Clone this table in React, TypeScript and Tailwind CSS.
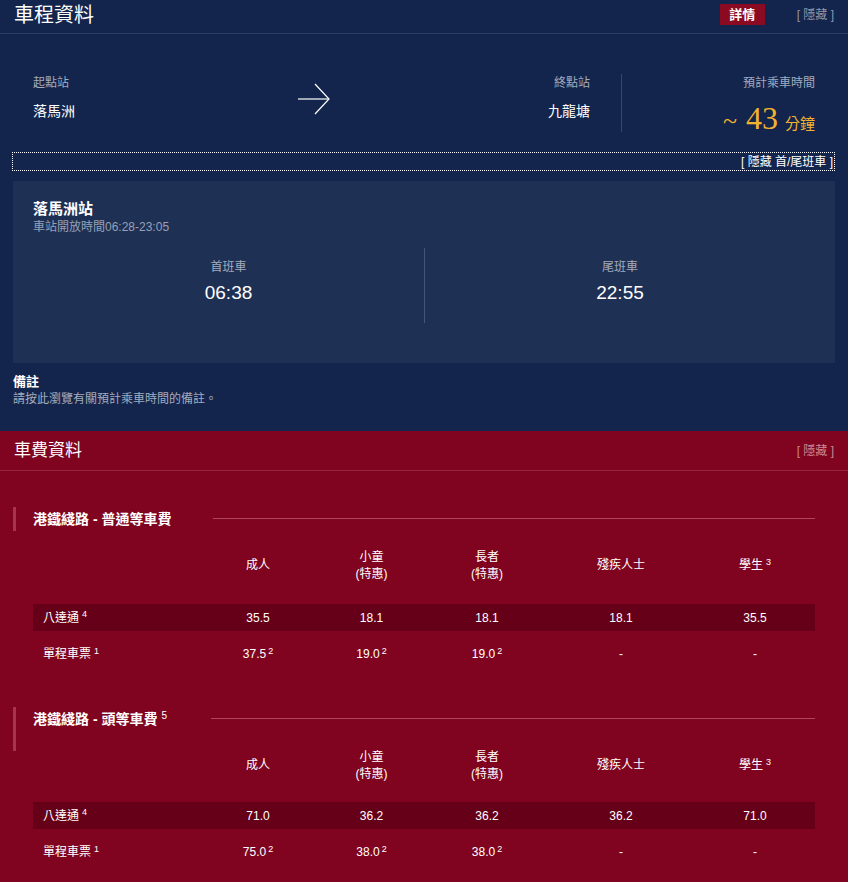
import React from 'react';

const FONT = "font-['Liberation_Sans','Noto_Sans_CJK_TC',sans-serif]";

const COLS = [
  { top: '成人' },
  { top: '小童', sub: '(特惠)' },
  { top: '長者', sub: '(特惠)' },
  { top: '殘疾人士' },
  { top: '學生', sup: '3' },
];

const FARES = [
  {
    title: '港鐵綫路 - 普通等車費',
    barH: 'h-[24px]',
    titleW: 'w-[180px]',
    rowMt: 'mt-[21px]',
    octopus: ['35.5', '18.1', '18.1', '18.1', '35.5'],
    single: ['37.5', '19.0', '19.0', '-', '-'],
  },
  {
    title: '港鐵綫路 - 頭等車費',
    sup: '5',
    barH: 'h-[44px]',
    titleW: 'w-[178px]',
    rowMt: 'mt-[19px]',
    octopus: ['71.0', '36.2', '36.2', '36.2', '71.0'],
    single: ['75.0', '38.0', '38.0', '-', '-'],
  },
];

const GRID = 'grid grid-cols-[167px_116px_111px_120px_148px_120px]';

const Arrow = () => (
  <svg width="34" height="32" viewBox="0 0 34 32" fill="none" stroke="white" strokeWidth="1.2">
    <line x1="1" y1="16" x2="32" y2="16" />
    <polyline points="18,1 32,16 18,31" />
  </svg>
);

const FareTable = ({ fare }: { fare: (typeof FARES)[number] }) => (
  <div className="mb-[30px]">
    {/* section heading */}
    <div className="flex items-start h-[24px] ml-[13px] mr-[33px]">
      <div className={`w-[3px] ${fare.barH} bg-[#a7344f] shrink-0`} />
      <div className={`ml-[17px] ${fare.titleW} shrink-0 text-[14px] leading-[24px] font-bold text-white whitespace-nowrap`}>
        {fare.title}
        {fare.sup && <sup className="ml-[4px] text-[10px] font-normal">{fare.sup}</sup>}
      </div>
      <div className="flex-1 mt-[11px] h-px bg-[#b0465d]" />
    </div>

    <div className="ml-[33px] mr-[33px] mt-[17px]">
      {/* header */}
      <div className={`${GRID} items-center h-[35px] text-[12px] leading-[17px] text-white`}>
        <div />
        {COLS.map((c) => (
          <div key={c.top} className="text-center">
            <div>
              {c.top}
              {c.sup && <sup className="ml-[3px] text-[9px]">{c.sup}</sup>}
            </div>
            {c.sub && <div>{c.sub}</div>}
          </div>
        ))}
      </div>

      {/* octopus row */}
      <div className={`${GRID} items-center h-[27px] ${fare.rowMt} bg-[#660019] text-[12px] text-white`}>
        <div className="pl-[10px]">
          八達通<sup className="ml-[3px] text-[9px]">4</sup>
        </div>
        {fare.octopus.map((v, i) => (
          <div key={i} className="text-center">{v}</div>
        ))}
      </div>

      {/* single journey row */}
      <div className={`${GRID} items-center h-[46px] text-[12px] text-white`}>
        <div className="pl-[10px]">
          單程車票<sup className="ml-[3px] text-[9px]">1</sup>
        </div>
        {fare.single.map((v, i) => (
          <div key={i} className="text-center">
            {v}
            {v !== '-' && <sup className="ml-[2px] text-[9px]">2</sup>}
          </div>
        ))}
      </div>
    </div>
  </div>
);

export default function App() {
  return (
    <div className={`w-[848px] h-[882px] overflow-hidden ${FONT}`}>
      {/* 車程資料 */}
      <section className="bg-[#13254c] pb-[24px]">
        <div className="flex items-start h-[34px] border-b border-[#2a3c68] pl-[14px] pr-[14px]">
          <h1 className="text-[20px] leading-[30px] text-white">車程資料</h1>
          <div className="ml-auto flex items-center mt-[4px]">
            <button className="w-[45px] h-[21px] bg-[#8a0a22] text-white text-[13px] font-bold leading-[21px]">
              詳情
            </button>
            <span className="ml-[32px] text-[12px] text-[#8f98ad]">[ 隱藏 ]</span>
          </div>
        </div>

        {/* trip */}
        <div className="flex items-start mx-[33px] pt-[41px]">
          <div className="w-[557px] flex items-start justify-between">
            <div>
              <div className="text-[12px] leading-[16px] text-[#a3abbd]">起點站</div>
              <div className="mt-[10px] text-[14px] leading-[20px] text-white">落馬洲</div>
            </div>
            <div className="mt-[8px] ml-[4px]">
              <Arrow />
            </div>
            <div className="text-right">
              <div className="text-[12px] leading-[16px] text-[#a3abbd]">終點站</div>
              <div className="mt-[10px] text-[14px] leading-[20px] text-white">九龍塘</div>
            </div>
          </div>
          <div className="ml-[31px] -mt-px w-px h-[58px] bg-[#34466f]" />
          <div className="flex-1 text-right">
            <div className="text-[12px] leading-[16px] text-[#a3abbd]">預計乘車時間</div>
            <div className="mt-[9px] h-[36px] flex items-baseline justify-end text-[#f2b230]">
              <span className="font-['Liberation_Serif',serif] text-[26px] leading-[36px] mr-[9px]">~</span>
              <span className="font-['Liberation_Serif',serif] text-[32px] leading-[36px]">43</span>
              <span className="ml-[7px] text-[15px]">分鐘</span>
            </div>
          </div>
        </div>

        {/* toggle */}
        <div className="mt-[16px] ml-[12px] mr-[13px] h-[19px] border border-dotted border-white flex items-center justify-end pr-[1px]">
          <span className="text-[12px] text-white leading-[16px]">[ 隱藏 首/尾班車 ]</span>
        </div>

        {/* station panel */}
        <div className="mt-[10px] ml-[13px] mr-[13px] bg-[#1f3055] px-[20px] pt-[19px] pb-[40px]">
          <div className="text-[15px] leading-[18px] font-bold text-white">落馬洲站</div>
          <div className="mt-[2px] text-[12px] leading-[14px] text-[#96a0b6]">車站開放時間06:28-23:05</div>
          <div className="mt-[14px] grid grid-cols-2 h-[75px]">
            <div className="text-center pt-[12px]">
              <div className="text-[12px] leading-[14px] text-[#a3abbd]">首班車</div>
              <div className="mt-[6px] text-[19px] leading-[26px] text-white">06:38</div>
            </div>
            <div className="text-center pt-[12px] border-l border-[#45567c]">
              <div className="text-[12px] leading-[14px] text-[#a3abbd]">尾班車</div>
              <div className="mt-[6px] text-[19px] leading-[26px] text-white">22:55</div>
            </div>
          </div>
        </div>

        {/* remarks */}
        <div className="ml-[13px] mt-[11px]">
          <div className="text-[13px] leading-[16px] font-bold text-white">備註</div>
          <div className="mt-px text-[12px] leading-[16px] text-[#a3abbd]">請按此瀏覽有關預計乘車時間的備註。</div>
        </div>
      </section>

      {/* 車費資料 */}
      <section className="bg-[#80041f] h-full">
        <div className="flex items-center h-[40px] border-b border-[#9b2640] pl-[14px] pr-[14px]">
          <h2 className="text-[17px] leading-[26px] text-white">車費資料</h2>
          <span className="ml-auto text-[12px] text-[#c98a97]">[ 隱藏 ]</span>
        </div>
        <div className="pt-[36px]">
          {FARES.map((f) => (
            <FareTable key={f.title} fare={f} />
          ))}
        </div>
      </section>
    </div>
  );
}
